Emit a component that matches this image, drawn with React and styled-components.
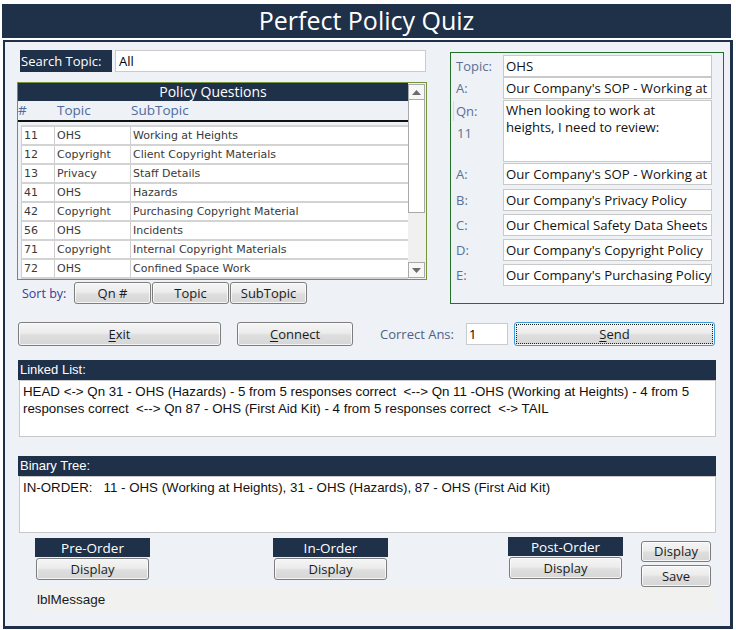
import React from 'react';
import styled, { createGlobalStyle } from 'styled-components';

const NAVY = '#1f3049';
const SANS = '"Open Sans", "Noto Sans", sans-serif';
const NARROW = '"Liberation Sans", Arial, sans-serif';

const Global = createGlobalStyle`
  html, body { margin: 0; padding: 0; background: #fff; }
  body { width: 736px; height: 630px; overflow: hidden; font-family: ${SANS}; }
  * { box-sizing: border-box; }
`;

const Page = styled.div`
  width: 736px;
  height: 630px;
  padding: 4px 0 0 2px;
  background: #fff;
`;

const TitleBar = styled.header`
  width: 729px;
  height: 34px;
  background: ${NAVY};
  color: #fff;
  display: flex;
  align-items: center;
  justify-content: center;
  font-family: ${SANS};
  font-size: 25px;
  line-height: 1;
  padding-bottom: 1px;
`;

const Panel = styled.main`
  margin: 2px 0 0 1px;
  width: 730px;
  height: 589px;
  background: #eef1f6;
  border-left: 2px solid ${NAVY};
  border-top: 2px solid ${NAVY};
  border-right: 3px solid ${NAVY};
  border-bottom: 3px solid ${NAVY};
  padding: 8px 0 0 12px;
  display: flex;
  flex-direction: column;
`;

const TopSection = styled.section`
  display: flex;
  align-items: flex-start;
  gap: 23px;
`;

const LeftCol = styled.div`
  width: 410px;
  display: flex;
  flex-direction: column;
`;

const SearchRow = styled.div`
  display: flex;
  gap: 3px;
  margin-left: 3px;
  height: 22px;
`;

const NavyLabel = styled.div`
  background: ${NAVY};
  color: #fff;
  font-family: ${SANS};
  font-size: 13px;
  display: flex;
  align-items: center;
  justify-content: ${p => (p.$center ? 'center' : 'flex-start')};
  padding-left: ${p => (p.$center ? 0 : 1)}px;
  width: ${p => p.$w}px;
  height: ${p => p.$h}px;
  white-space: nowrap;
`;

const TextBox = styled.div`
  background: #fff;
  border: 1px solid #cbcbcb;
  width: ${p => p.$w}px;
  height: ${p => p.$h}px;
  font-family: ${SANS};
  font-size: 13px;
  color: #000;
  padding: 0 3px;
  line-height: ${p => p.$h - 2}px;
  white-space: nowrap;
  overflow: hidden;
`;

const ListBox = styled.div`
  margin-top: 10px;
  width: 410px;
  height: 198px;
  border: 1px solid #77933c;
  display: flex;
  overflow: hidden;
  background: #eef1f6;
`;

const ListMain = styled.div`
  width: 390px;
  display: flex;
  flex-direction: column;
`;

const ListTitle = styled.div`
  height: 20px;
  background: ${NAVY};
  color: #fff;
  font-family: ${SANS};
  font-size: 14px;
  display: flex;
  align-items: center;
  justify-content: center;
  line-height: 1;
`;

const ColHeader = styled.div`
  height: 22px;
  display: grid;
  grid-template-columns: 39px 74px 1fr;
  align-items: end;
  border-bottom: 2px solid #111;
  color: #4e6a9e;
  font-family: ${SANS};
  font-size: 13.5px;
  line-height: 18px;
  padding-bottom: 1px;
`;

const Rows = styled.div`
  margin-top: 3px;
  margin-left: 3px;
  border-top: 2px solid #d3d3d3;
  background: #fff;
`;

const Row = styled.div`
  height: 19px;
  display: grid;
  grid-template-columns: 33px 76px 1fr;
  border-bottom: 2px solid #d3d3d3;
`;

const Cell = styled.div`
  border-left: 1px solid #cfcfcf;
  padding-left: 2px;
  padding-top: 1px;
  font-family: "DejaVu Sans", Verdana, sans-serif;
  font-size: 11px;
  color: #3a3a3a;
  line-height: 16px;
  white-space: nowrap;
  overflow: hidden;
`;

const Scrollbar = styled.div`
  width: 18px;
  padding: 1px 1px 1px 0;
  display: flex;
  flex-direction: column;
  background: #f0f0f0;
`;

const ArrowBtn = styled.div`
  height: 16px;
  border: 1px solid #a9a9a9;
  background: #f7f7f7;
  display: flex;
  align-items: center;
  justify-content: center;
`;

const Thumb = styled.div`
  height: 114px;
  margin-top: -1px;
  border: 1px solid #a9a9a9;
  background: #fff;
`;

const Track = styled.div`
  flex: 1;
`;

const SortRow = styled.div`
  margin-top: 2px;
  display: flex;
  align-items: center;
  gap: 1px;
`;

const SortLabel = styled.div`
  width: 56px;
  padding-left: 5px;
  color: #3b3b9b;
  font-family: ${SANS};
  font-size: 12.5px;
`;

const Btn = styled.button`
  width: ${p => p.$w}px;
  height: ${p => p.$h}px;
  margin: 0;
  padding: 0;
  border: 1px solid ${p => (p.$focus ? '#3c9bd6' : '#7d7d7d')};
  border-radius: 3px;
  background: linear-gradient(#f5f5f5 0%, #ececec 45%, #dedede 55%, #d6d6d6 100%);
  box-shadow: inset 0 0 0 1px rgba(255, 255, 255, 0.75);
  font-family: ${SANS};
  font-size: 13px;
  color: #1b1b1b;
  line-height: 1;
  outline: ${p => (p.$focus ? '1px dotted #222' : 'none')};
  outline-offset: -3px;
  u { text-decoration: underline; text-underline-offset: 2px; }
`;

const QuizPanel = styled.div`
  margin-top: 2px;
  width: 274px;
  height: 252px;
  border: 1px solid #22702a;
  padding: 2px 0 0 5px;
  display: grid;
  grid-template-columns: 47px 209px;
  align-content: start;
`;

const QLabel = styled.div`
  color: #5b7094;
  font-family: ${SANS};
  font-size: 13px;
  line-height: 20px;
  margin-top: ${p => p.$mt || 0}px;
  padding-top: 1px;
`;

const QnLabel = styled(QLabel)`
  display: flex;
  flex-direction: column;
  div:first-child { border-left: 1px solid #d6d9de; margin-left: -3px; padding-left: 2px; }
  div:last-child { margin-top: 2px; padding-left: 1px; }
`;

const Field = styled.div`
  margin-top: ${p => p.$mt || 0}px;
  height: ${p => p.$h || 22}px;
  background: #fff;
  border: 1px solid #c9c9c9;
  font-family: ${SANS};
  font-size: 13.2px;
  color: #111;
  padding: 0 0 0 2px;
  line-height: 20px;
  white-space: nowrap;
  overflow: hidden;
`;

const AreaField = styled(Field)`
  white-space: normal;
  line-height: 17px;
  padding: 1px 24px 0 2px;
`;

const ButtonsRow = styled.div`
  margin-top: 18px;
  margin-left: 1px;
  display: flex;
  align-items: center;
`;

const AnsLabel = styled.div`
  margin-left: 27px;
  width: 86px;
  color: #4f6288;
  font-family: ${SANS};
  font-size: 13px;
`;

const AnsInput = styled(TextBox)`
  margin-right: 6px;
  padding: 0 2px;
`;

const Block = styled.section`
  margin-top: ${p => p.$mt}px;
  margin-left: 1px;
  width: 698px;
`;

const BlockHead = styled.div`
  height: 20px;
  background: ${NAVY};
  color: #fff;
  font-family: ${NARROW};
  font-size: 13px;
  line-height: 20px;
  padding-left: 2px;
`;

const BlockBody = styled.div`
  height: 57px;
  margin-left: 1px;
  background: #fff;
  border: 1px solid #c8c8c8;
  font-family: ${NARROW};
  font-size: 13.3px;
  color: #111;
  line-height: 17px;
  padding: 2px 3px;
  white-space: pre-wrap;
`;

const BottomRow = styled.div`
  margin-top: 5px;
  display: flex;
  align-items: flex-start;
`;

const OrderGroup = styled.div`
  margin-left: ${p => p.$ml}px;
  margin-top: ${p => p.$mt}px;
  width: 115px;
  display: flex;
  flex-direction: column;
  gap: 1px;
  button { margin-left: 1px; }
`;

const GroupLabel = styled(NavyLabel)`
  font-size: 13.5px;
`;

const SideStack = styled.div`
  margin-left: 18px;
  margin-top: 3px;
  display: flex;
  flex-direction: column;
  gap: 3px;
`;

const MessageBar = styled.div`
  margin-top: 1px;
  margin-left: 16px;
  width: 683px;
  height: 23px;
  background: #f1f1ef;
  padding-left: 4px;
  font-family: ${NARROW};
  font-size: 13.5px;
  color: #1a1a1a;
  line-height: 23px;
`;

const Tri = ({ down }) => (
  <svg width="9" height="5" viewBox="0 0 9 5">
    <path d={down ? 'M0 0H9L4.5 5Z' : 'M0 5H9L4.5 0Z'} fill="#6b6b6b" />
  </svg>
);

const rows = [
  ['11', 'OHS', 'Working at Heights'],
  ['12', 'Copyright', 'Client Copyright Materials'],
  ['13', 'Privacy', 'Staff Details'],
  ['41', 'OHS', 'Hazards'],
  ['42', 'Copyright', 'Purchasing Copyright Material'],
  ['56', 'OHS', 'Incidents'],
  ['71', 'Copyright', 'Internal Copyright Materials'],
  ['72', 'OHS', 'Confined Space Work'],
];

const answers = [
  ['A:', "Our Company's SOP - Working at Heights", 1],
  ['B:', "Our Company's Privacy Policy", 4],
  ['C:', 'Our Chemical Safety Data Sheets', 3],
  ['D:', "Our Company's Copyright Policy", 3],
  ['E:', "Our Company's Purchasing Policy", 3],
];

export default function App() {
  return (
    <Page>
      <Global />
      <TitleBar>Perfect Policy Quiz</TitleBar>
      <Panel>
        <TopSection>
          <LeftCol>
            <SearchRow>
              <NavyLabel $w={92} $h={22}>Search Topic:</NavyLabel>
              <TextBox $w={311} $h={22}>All</TextBox>
            </SearchRow>
            <ListBox>
              <ListMain>
                <ListTitle>Policy Questions</ListTitle>
                <ColHeader>
                  <span>#</span>
                  <span>Topic</span>
                  <span>SubTopic</span>
                </ColHeader>
                <Rows>
                  {rows.map(r => (
                    <Row key={r[0]}>
                      <Cell>{r[0]}</Cell>
                      <Cell>{r[1]}</Cell>
                      <Cell>{r[2]}</Cell>
                    </Row>
                  ))}
                </Rows>
              </ListMain>
              <Scrollbar>
                <ArrowBtn><Tri /></ArrowBtn>
                <Thumb />
                <Track />
                <ArrowBtn><Tri down /></ArrowBtn>
              </Scrollbar>
            </ListBox>
            <SortRow>
              <SortLabel>Sort by:</SortLabel>
              <Btn $w={77} $h={22}>Qn #</Btn>
              <Btn $w={77} $h={22}>Topic</Btn>
              <Btn $w={77} $h={22}>SubTopic</Btn>
            </SortRow>
          </LeftCol>
          <QuizPanel>
            <QLabel>Topic:</QLabel>
            <Field>OHS</Field>
            <QLabel>A:</QLabel>
            <Field>Our Company's SOP - Working at Heights</Field>
            <QnLabel $mt={1}>
              <div>Qn:</div>
              <div>11</div>
            </QnLabel>
            <AreaField $mt={1} $h={62}>When looking to work at heights, I need to review:</AreaField>
            {answers.map(([l, t, mt]) => (
              <React.Fragment key={l}>
                <QLabel $mt={mt}>{l}</QLabel>
                <Field $mt={mt}>{t}</Field>
              </React.Fragment>
            ))}
          </QuizPanel>
        </TopSection>

        <ButtonsRow>
          <Btn $w={203} $h={24}><u>E</u>xit</Btn>
          <Btn $w={116} $h={24} style={{ marginLeft: 16 }}><u>C</u>onnect</Btn>
          <AnsLabel>Correct Ans:</AnsLabel>
          <AnsInput $w={42} $h={22}>1</AnsInput>
          <Btn $w={201} $h={24} $focus><u>S</u>end</Btn>
        </ButtonsRow>

        <Block $mt={14}>
          <BlockHead>Linked List:</BlockHead>
          <BlockBody>HEAD &lt;-&gt; Qn 31 - OHS (Hazards) - 5 from 5 responses correct  &lt;--&gt; Qn 11 -OHS (Working at Heights) - 4 from 5 responses correct  &lt;--&gt; Qn 87 - OHS (First Aid Kit) - 4 from 5 responses correct  &lt;-&gt; TAIL</BlockBody>
        </Block>

        <Block $mt={19}>
          <BlockHead>Binary Tree:</BlockHead>
          <BlockBody>IN-ORDER:   11 - OHS (Working at Heights), 31 - OHS (Hazards), 87 - OHS (First Aid Kit)</BlockBody>
        </Block>

        <BottomRow>
          <OrderGroup $ml={18} $mt={0}>
            <GroupLabel $center $w={115} $h={19}>Pre-Order</GroupLabel>
            <Btn $w={113} $h={22}>Display</Btn>
          </OrderGroup>
          <OrderGroup $ml={123} $mt={0}>
            <GroupLabel $center $w={115} $h={19}>In-Order</GroupLabel>
            <Btn $w={113} $h={22}>Display</Btn>
          </OrderGroup>
          <OrderGroup $ml={120} $mt={-1}>
            <GroupLabel $center $w={115} $h={19}>Post-Order</GroupLabel>
            <Btn $w={113} $h={22}>Display</Btn>
          </OrderGroup>
          <SideStack>
            <Btn $w={70} $h={21}>Display</Btn>
            <Btn $w={70} $h={22}>Save</Btn>
          </SideStack>
        </BottomRow>

        <MessageBar>lblMessage</MessageBar>
      </Panel>
    </Page>
  );
}
